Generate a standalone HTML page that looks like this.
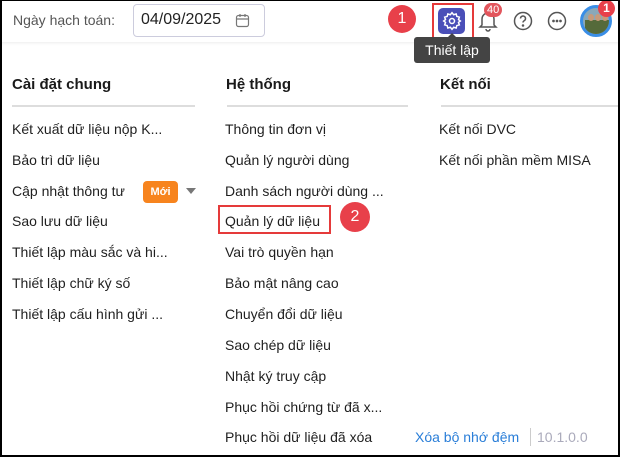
<!DOCTYPE html>
<html><head><meta charset="utf-8"><style>
*{margin:0;padding:0;box-sizing:border-box}
body{width:620px;height:457px;overflow:hidden;background:#fff;font-family:"Liberation Sans",sans-serif;color:#1f1f1f;position:relative}
.frame{position:absolute;inset:0;border:2px solid #000;border-top-width:1px;pointer-events:none;z-index:10}
.hdr{position:absolute;left:0;top:0;width:620px;height:42px;background:#fff;box-shadow:0 1px 3px rgba(0,0,0,.08)}
.a{position:absolute;white-space:nowrap}
.h{font-size:15px;font-weight:bold;color:#1a1a1a;top:76px}
.line{position:absolute;top:105px;height:2px;background:#ddd}
.it{position:absolute;font-size:14px;white-space:nowrap;color:#1f1f1f}
.badge{position:absolute;border-radius:50%;background:#e8404a;color:#fff;text-align:center;font-size:16px}
</style></head><body>
<div class="hdr"></div>
<div class="a" style="left:13px;top:12px;font-size:14px;color:#555">Ngày hạch toán:</div>
<div class="a" style="left:133px;top:4px;width:132px;height:33px;border:1px solid #ccd;border-radius:4px"></div>
<div class="a" style="left:141px;top:11px;font-size:16px;color:#222">04/09/2025</div>
<svg class="a" style="left:235px;top:13px" width="15" height="15" viewBox="0 0 15 15" fill="none" stroke="#777" stroke-width="1.2"><rect x="1.5" y="2.5" width="12" height="11" rx="2"/><path d="M5 1v3M10 1v3M1.5 6h12"/></svg>
<div class="badge" style="left:388px;top:5px;width:28px;height:28px;line-height:28px">1</div>
<div class="a" style="left:432px;top:3px;width:42px;height:36px;border:2px solid #e53a3a"></div>
<div class="a" style="left:438px;top:8px;width:27px;height:26px;border-radius:5px;background:#4a4fb8"></div>
<svg class="a" style="left:442px;top:11px" width="20" height="20" viewBox="0 0 24 24" fill="none" stroke="#fff" stroke-width="1.8"><circle cx="12" cy="12" r="3"/><path d="M12 2l2 2.5 3-1 .8 3 3 .8-1 3L22 12l-2.2 1.7 1 3-3 .8-.8 3-3-1L12 22l-2-2.5-3 1-.8-3-3-.8 1-3L2 12l2.2-1.7-1-3 3-.8.8-3 3 1z"/></svg>
<div class="a" style="left:414px;top:37px;width:76px;height:26px;background:#444;border-radius:3px;color:#fff;font-size:14px;text-align:center;line-height:26px">Thiết lập</div>
<div class="a" style="left:447px;top:33px;width:0;height:0;border:5px solid transparent;border-bottom-color:#444;border-top:0"></div>
<svg class="a" style="left:478px;top:10px" width="20" height="22" viewBox="0 0 20 22" fill="none" stroke="#555" stroke-width="1.5"><path d="M4 15V9a6 6 0 0112 0v6l2 2H2z"/><path d="M8 19a2 2 0 004 0"/></svg>
<div class="a" style="left:484px;top:3px;background:#e2555c;color:#fff;font-size:11px;border-radius:8px;padding:0 3px;line-height:14px">40</div>
<svg class="a" style="left:513px;top:11px" width="20" height="20" viewBox="0 0 20 20" fill="none" stroke="#555" stroke-width="1.5"><circle cx="10" cy="10" r="8.5"/><path d="M7.5 7.5a2.5 2.5 0 114 2c-1 .6-1.5 1-1.5 2"/><circle cx="10" cy="14.5" r=".5" fill="#555"/></svg>
<svg class="a" style="left:547px;top:11px" width="20" height="20" viewBox="0 0 20 20" fill="none" stroke="#555" stroke-width="1.5"><circle cx="10" cy="10" r="8.5"/><circle cx="6.5" cy="10" r=".6" fill="#555"/><circle cx="10" cy="10" r=".6" fill="#555"/><circle cx="13.5" cy="10" r=".6" fill="#555"/></svg>
<div class="a" style="left:580px;top:5px;width:32px;height:32px;border-radius:50%;border:3px solid #3a8ee6;background:#8aa8b8;overflow:hidden"><div style="position:absolute;left:2px;top:12px;width:24px;height:14px;background:#556a3a"></div><div style="position:absolute;left:5px;top:6px;width:6px;height:7px;border-radius:50%;background:#c89a7a"></div><div style="position:absolute;left:12px;top:6px;width:6px;height:7px;border-radius:50%;background:#c89a7a"></div><div style="position:absolute;left:19px;top:6px;width:6px;height:7px;border-radius:50%;background:#c89a7a"></div></div>
<div class="badge" style="left:598px;top:0;width:17px;height:17px;line-height:17px;font-size:12px;font-weight:bold">1</div>

<div class="a h" style="left:12px">Cài đặt chung</div>
<div class="a h" style="left:226px">Hệ thống</div>
<div class="a h" style="left:440px">Kết nối</div>
<div class="line" style="left:12px;width:183px"></div>
<div class="line" style="left:227px;width:181px"></div>
<div class="line" style="left:441px;width:181px"></div>

<div class="it" style="left:12px;top:121px">Kết xuất dữ liệu nộp K...</div>
<div class="it" style="left:12px;top:152px">Bảo trì dữ liệu</div>
<div class="it" style="left:12px;top:183px">Cập nhật thông tư</div>
<div class="a" style="left:143px;top:181px;width:35px;height:22px;background:#f7841e;border-radius:4px;color:#fff;font-size:11px;font-weight:bold;text-align:center;line-height:22px">Mới</div>
<div class="a" style="left:186px;top:188px;border:5px solid transparent;border-top:6px solid #777;border-bottom:0"></div>
<div class="it" style="left:12px;top:213px">Sao lưu dữ liệu</div>
<div class="it" style="left:12px;top:244px">Thiết lập màu sắc và hi...</div>
<div class="it" style="left:12px;top:275px">Thiết lập chữ ký số</div>
<div class="it" style="left:12px;top:306px">Thiết lập cấu hình gửi ...</div>

<div class="it" style="left:225px;top:121px">Thông tin đơn vị</div>
<div class="it" style="left:225px;top:152px">Quản lý người dùng</div>
<div class="it" style="left:225px;top:183px">Danh sách người dùng ...</div>
<div class="a" style="left:218px;top:205px;width:113px;height:29px;border:2px solid #e53a3a"></div>
<div class="it" style="left:225px;top:213px">Quản lý dữ liệu</div>
<div class="badge" style="left:340px;top:202px;width:30px;height:30px;line-height:30px">2</div>
<div class="it" style="left:225px;top:244px">Vai trò quyền hạn</div>
<div class="it" style="left:225px;top:275px">Bảo mật nâng cao</div>
<div class="it" style="left:225px;top:306px">Chuyển đổi dữ liệu</div>
<div class="it" style="left:225px;top:337px">Sao chép dữ liệu</div>
<div class="it" style="left:225px;top:368px">Nhật ký truy cập</div>
<div class="it" style="left:225px;top:399px">Phục hồi chứng từ đã x...</div>
<div class="it" style="left:225px;top:429px">Phục hồi dữ liệu đã xóa</div>

<div class="it" style="left:439px;top:121px">Kết nối DVC</div>
<div class="it" style="left:439px;top:152px">Kết nối phần mềm MISA</div>

<div class="it" style="left:415px;top:429px;color:#2a7ed8">Xóa bộ nhớ đệm</div>
<div class="a" style="left:530px;top:428px;width:1px;height:18px;background:#ccc"></div>
<div class="it" style="left:537px;top:429px;color:#aab">10.1.0.0</div>
<div class="frame"></div>
</body></html>
